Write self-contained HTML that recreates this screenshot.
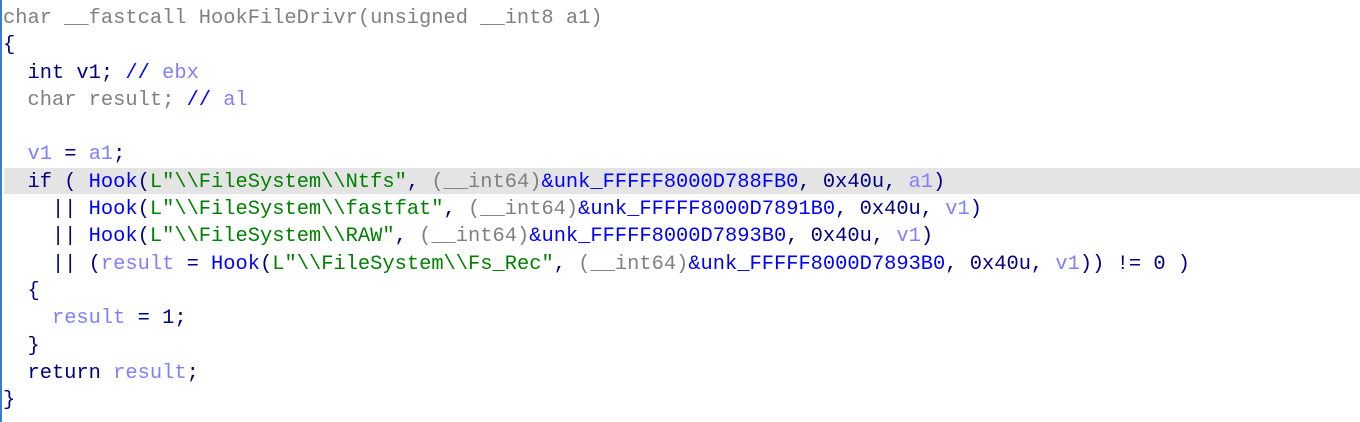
<!DOCTYPE html>
<html><head><meta charset="utf-8"><style>
html,body{margin:0;padding:0;background:#fff;width:1360px;height:422px;overflow:hidden}
.wrap{position:absolute;left:0;top:0;width:1360px;height:422px;border-left:2px solid #3b7ad8;box-sizing:border-box}
.hl{position:absolute;left:2px;top:168px;width:1358px;height:26px;background:#e4e4e4}
pre{position:absolute;left:1px;top:5px;margin:0;font-family:"Liberation Mono",monospace;font-size:20.4px;line-height:27.3px;color:#000080}
.g{color:#808080}.b{color:#0000ff}.v{color:#8080ff}.s{color:#008000}.n{color:#000080}
</style></head><body><div class="wrap"><div class="hl"></div>
<pre><span class="g">char __fastcall HookFileDrivr(unsigned __int8 a1)</span>
{
  int v1; <span class="b">// </span><span class="v">ebx</span>
  <span class="g">char result;</span> <span class="b">// </span><span class="v">al</span>

  <span class="v">v1</span> = <span class="v">a1</span>;
  if ( <span class="b">Hook</span>(<span class="s">L"\\FileSystem\\Ntfs"</span>, <span class="g">(__int64)</span><span class="b">&amp;unk_FFFFF8000D788FB0</span>, 0x40u, <span class="v">a1</span>)
    || <span class="b">Hook</span>(<span class="s">L"\\FileSystem\\fastfat"</span>, <span class="g">(__int64)</span><span class="b">&amp;unk_FFFFF8000D7891B0</span>, 0x40u, <span class="v">v1</span>)
    || <span class="b">Hook</span>(<span class="s">L"\\FileSystem\\RAW"</span>, <span class="g">(__int64)</span><span class="b">&amp;unk_FFFFF8000D7893B0</span>, 0x40u, <span class="v">v1</span>)
    || (<span class="v">result</span> = <span class="b">Hook</span>(<span class="s">L"\\FileSystem\\Fs_Rec"</span>, <span class="g">(__int64)</span><span class="b">&amp;unk_FFFFF8000D7893B0</span>, 0x40u, <span class="v">v1</span>)) != 0 )
  {
    <span class="v">result</span> = 1;
  }
  return <span class="v">result</span>;
}</pre></div></body></html>
